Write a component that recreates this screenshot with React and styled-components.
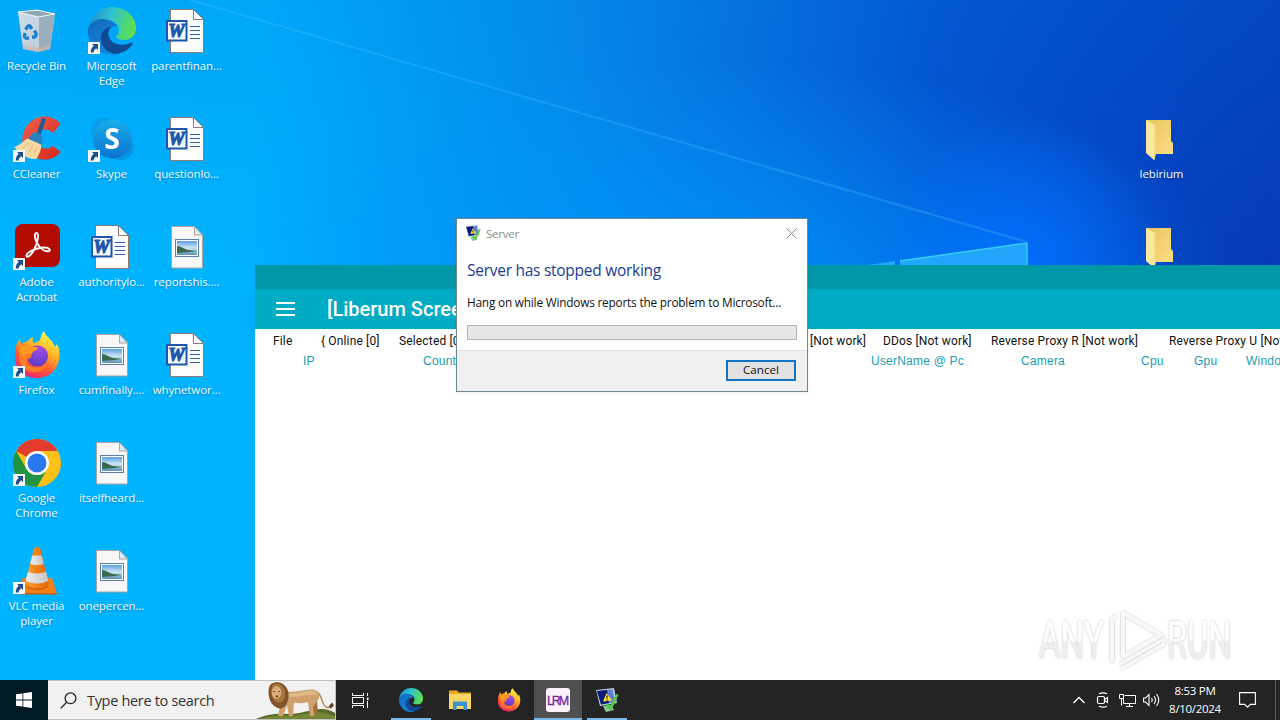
import React from "react";
import styled, { createGlobalStyle, css } from "styled-components";

const GlobalStyle = createGlobalStyle`
  * {
    box-sizing: border-box;
  }

  body {
    margin: 0;
    overflow: hidden;
    font-family: "Open Sans", "Noto Sans", sans-serif;
  }

  svg {
    display: block;
  }
`;

const Screen = styled.div`
  position: relative;
  display: flex;
  flex-direction: column;
  width: 1280px;
  height: 720px;
  overflow: hidden;
`;

const Desktop = styled.main`
  position: relative;
  flex: 1;
  overflow: hidden;
  background:
    radial-gradient(ellipse 150px 150px at 1020px 270px, rgba(0, 110, 255, 0.95), rgba(0, 110, 255, 0) 100%),
    radial-gradient(ellipse 520px 240px at 720px 300px, rgba(0, 150, 255, 0.8), rgba(0, 140, 255, 0) 100%),
    linear-gradient(to bottom, rgba(0, 120, 225, 0.2), rgba(0, 180, 255, 0) 260px),
    linear-gradient(93deg, #00b4ff 0, #00b3ff 260px, #00a2f8 390px, #058cec 570px, #056cdc 770px, #0350ce 940px, #0444c4 1100px, #053ab8 1290px);
`;

const Wallpaper = styled.svg`
  position: absolute;
  top: 0;
  left: 0;
`;

const IconGrid = styled.div`
  position: relative;
  display: grid;
  grid-template-columns: repeat(17, 75px);
  grid-auto-rows: 108px;
  margin-left: -1px;
`;

const Shortcut = styled.div`
  grid-column: ${(p) => p.$col};
  grid-row: ${(p) => p.$row};
  display: flex;
  flex-direction: column;
  align-items: center;
  padding-top: 7px;
`;

const ShortcutIcon = styled.div`
  position: relative;
  width: 48px;
  height: 48px;
`;

const ArrowBadge = styled.svg`
  position: absolute;
  left: 0;
  bottom: 1px;
`;

const Label = styled.span`
  margin-top: 3px;
  color: #f2faff;
  font-size: 11.5px;
  line-height: 15px;
  letter-spacing: -0.1px;
  text-align: center;
  white-space: pre;
  text-shadow: 0 1px 2px rgba(0, 40, 90, 0.35);
`;

const AppWindow = styled.section`
  position: absolute;
  top: 265px;
  left: 255px;
  width: 1100px;
  height: 415px;
  background: #fff;
`;

const AppStrip = styled.div`
  height: 24px;
  background: #0097a7;
`;

const AppHeader = styled.header`
  display: flex;
  align-items: center;
  gap: 32px;
  height: 40px;
  padding-left: 21px;
  color: #fff;
  background: #00acc4;
  font: 500 20px Roboto, sans-serif;
`;

const HeaderRow = styled.div`
  display: grid;
  grid-template-columns: ${(p) => p.$columns};
  padding-left: ${(p) => p.$start}px;
  height: ${(p) => p.$height}px;
  line-height: ${(p) => p.$height}px;
  font-size: 12px;
  white-space: pre;

  ${(p) =>
    p.$menu
      ? css`
          color: #111;
          font-family: Roboto, sans-serif;
          letter-spacing: 0.15px;
        `
      : css`
          color: #1a9db0;
          font-family: "Liberation Sans", sans-serif;
          letter-spacing: 0.22px;
        `}
`;

const Dialog = styled.section`
  position: absolute;
  top: 218px;
  left: 456px;
  display: flex;
  flex-direction: column;
  width: 352px;
  height: 174px;
  background: #fff;
  border: 1px solid #6f8791;
  box-shadow: 0 1px 4px rgba(0, 0, 0, 0.06);
`;

const DialogTitle = styled.div`
  display: flex;
  align-items: center;
  gap: 5px;
  height: 28px;
  padding: 0 10px 0 8px;
  color: #8c8c8c;
  font-size: 11.5px;
  letter-spacing: -0.25px;

  svg:last-child {
    margin-left: auto;
  }
`;

const DialogBody = styled.div`
  flex: 1;
  padding: 12px 10px 0;
`;

const Heading = styled.h1`
  margin: 0;
  color: #1a3c94;
  font-size: 15.5px;
  font-weight: 400;
  line-height: 22px;
  letter-spacing: -0.27px;
`;

const Message = styled.p`
  margin: 13px 0 0;
  color: #111;
  font-size: 11.8px;
  line-height: 16px;
  letter-spacing: -0.19px;
  white-space: nowrap;
`;

const ProgressBar = styled.div`
  height: 15px;
  margin-top: 15px;
  background: #e6e6e6;
  border: 1px solid #b4b4b4;
`;

const DialogFooter = styled.footer`
  display: flex;
  justify-content: flex-end;
  height: 41px;
  padding: 9px 11px 0 0;
  background: #f0f0f0;
  border-top: 1px solid #dfdfdf;
`;

const CancelButton = styled.button`
  width: 70px;
  height: 21px;
  padding: 0 0 1px;
  color: #111;
  background: #e1e1e1;
  border: 2px solid #0f75c4;
  font: 11.6px/16px "Open Sans", sans-serif;
`;

const Watermark = styled.svg`
  position: absolute;
  left: 1030px;
  top: 600px;
  overflow: visible;
`;

const Taskbar = styled.footer`
  position: relative;
  display: flex;
  height: 40px;
  background: #242424;
`;

const StartButton = styled.div`
  display: grid;
  place-items: center;
  width: 48px;
  background: #001b24;
`;

const SearchBox = styled.div`
  display: flex;
  align-items: center;
  width: 288px;
  padding-left: 12px;
  color: #333;
  background: #f1f1f1;
  border: solid #c3c3c3;
  border-width: 1px 1px 1px 0;
  font-size: 14.5px;
  letter-spacing: -0.32px;

  span {
    margin-left: 10px;
    white-space: nowrap;
  }

  svg:last-child {
    margin-left: auto;
  }
`;

const TaskButton = styled.div`
  display: grid;
  place-items: center;
  width: 48px;
  margin-right: ${(p) => p.$gap || 1}px;
  background: ${(p) => (p.$active ? "#505050" : "transparent")};
  box-shadow: ${(p) => (p.$active ? "inset 0 -2px #76b9ed" : "none")};

  ${(p) =>
    p.$running &&
    css`
      background: linear-gradient(#76b9ed, #76b9ed) center bottom / 40px 2px no-repeat;
    `}
`;

const Tray = styled.div`
  display: flex;
  align-items: center;
  margin-left: auto;
  padding-right: 4px;
  color: #fff;
`;

const TrayIcon = styled.div`
  display: grid;
  place-items: center;
  width: ${(p) => p.$width || 24}px;
`;

const Clock = styled.div`
  width: 64px;
  font-size: 11.5px;
  line-height: 18px;
  letter-spacing: -0.3px;
  text-align: center;
`;

const ShowDesktop = styled.div`
  width: 1px;
  height: 40px;
  margin-left: 8px;
  background: #5c5c5c;
`;

function RecycleBinIcon() {
  return (
    <svg width="48" height="48" viewBox="0 0 48 48">
      <defs>
        <linearGradient id="bin" x1="0" y1="0" x2="1" y2="1">
          <stop offset="0" stopColor="#cfdde8" />
          <stop offset="1" stopColor="#b9c8d3" />
        </linearGradient>
      </defs>
      <path d="M5 5 25 3 42 7 37 42 25 45 10 42Z" fill="url(#bin)" />
      <path d="M5 5 24 3 42 7 25 10Z" fill="#8fa6b6" stroke="#eef5fa" strokeWidth="1.200" />
      <path d="M26 10.500 41.500 7.500 37 42 26 45Z" fill="#9aadba" />
      <path d="M10 38 26 41 37.500 38 37 42 25 45 10.500 42Z" fill="#cdb8ac" opacity=".7" />
      <g fill="none" stroke="#1f7fd4" strokeWidth="3.400">
        <path d="M12.500 22.500 15 19.200q1-1 2.200.2L18.800 22" />
        <path d="M21.500 23.500 23 26.800q.4 2-1.500 3.200l-2.500.3" />
        <path d="M16 31.300l-2.800-.3q-2-.6-1.700-2.600l.8-2.400" />
      </g>
    </svg>
  );
}

function EdgeIcon({ size = 48 }) {
  return (
    <svg width={size} height={size} viewBox="0 0 48 48">
      <defs>
        <linearGradient id="edgeTop" x1="0" y1=".4" x2="1" y2=".6">
          <stop offset="0" stopColor="#1b92cf" />
          <stop offset=".45" stopColor="#2fc2d0" />
          <stop offset=".8" stopColor="#4bd873" />
          <stop offset="1" stopColor="#6be044" />
        </linearGradient>
        <linearGradient id="edgeMid" x1="0" y1="0" x2=".6" y2="1">
          <stop offset="0" stopColor="#1268bd" />
          <stop offset="1" stopColor="#128ade" />
        </linearGradient>
      </defs>
      <path d="M0 24C1 9 12 0 24 0c14 0 24 10 24 21 0 8-6 12-12 12-5 0-8-1.500-8-3 0-1 3-2.500 3-7 0-6-6-10.500-14-10.500C9 12.500 2 17 0 24Z" fill="url(#edgeTop)" />
      <path d="M0 24c0-7 7-12 14-12 8 0 14 4 15 8.500-6-2.500-11 2-11 9.500 0 8 6 14 14 16.500-3 1-5 1.500-8 1.500C11 48 0 37 0 24Z" fill="url(#edgeMid)" />
      <path d="M21 20c-6 2-10 9-7.500 16C16 43 23 47.500 30 46.500c6-1 11-4 14.500-9.500.6-1-.4-1.800-1.500-1.200C36 39.300 27 38 23 33c-4-5-3-10 1-13Z" fill="#114a94" />
      <path d="M24 20c2-1 4-1 5 .5.5 4-1 6-2 8-.8 1.500.5 3 2.500 4 4 2 8 1 10.500 0-3 5-10 6-14.500 3C20 32 19 24 24 20Z" fill={size > 30 ? "#02a5f8" : "#242424"} />
    </svg>
  );
}

function WordIcon() {
  return (
    <svg width="48" height="48" viewBox="0 0 48 48">
      <path d="M7.500 2.500h23l10 10v33h-33Z" fill="#fdfdfd" stroke="#8a7a73" />
      <path d="M30.500 2.500v10h10Z" fill="#fff" stroke="#8a7a73" />
      <path d="M27 19.500h10M27 23.500h10M27 27.500h10M27 31.500h10" stroke="#2b5fad" />
      <rect x="3" y="13" width="21.500" height="21.500" fill="#1d57ad" />
      <rect x="5" y="15" width="17.500" height="17.500" fill="#f5f8fc" />
      <text x="13.600" y="30" textAnchor="middle" fontFamily="Liberation Serif, serif" fontStyle="italic" fontWeight="700" fontSize="18.500" fill="#1d57ad" stroke="#1d57ad" strokeWidth="1.100">
        W
      </text>
    </svg>
  );
}

function PictureIcon() {
  return (
    <svg width="48" height="48" viewBox="0 0 48 48">
      <defs>
        <linearGradient id="photo" x1="0" y1="0" x2="0" y2="1">
          <stop offset="0" stopColor="#5b9ee0" />
          <stop offset=".5" stopColor="#cfe6f5" />
          <stop offset=".7" stopColor="#9cc4d8" />
          <stop offset="1" stopColor="#5b90b8" />
        </linearGradient>
      </defs>
      <path d="M8.500 3.500h23l8 8.500v33h-31Z" fill="#f7f7f7" stroke="#aaa39f" />
      <path d="M31.500 3.500V12h8Z" fill="#d9edf5" stroke="#aaa39f" />
      <rect x="12.500" y="16.500" width="23" height="17" fill="#fff" stroke="#5d7fa6" />
      <rect x="14" y="18" width="20" height="14" fill="url(#photo)" />
      <path d="M14 23c4 0 7 3 11 4l9 1-9 1.200L14 30Z" fill="#3c6b50" />
    </svg>
  );
}

function CCleanerIcon() {
  return (
    <svg width="48" height="48" viewBox="0 0 48 48">
      <defs>
        <linearGradient id="ccRed" x1="0" y1="0" x2="1" y2="1">
          <stop offset="0" stopColor="#f2604c" />
          <stop offset="1" stopColor="#d3281d" />
        </linearGradient>
      </defs>
      <path d="M47.500 9 40 18c-6-6-15-4-16 5s8 14 16 8l7.500 6C38 50 13 46 9.500 28 8 11 21 1 33 1.500c6 .5 11 3 14.500 7.500Z" fill="url(#ccRed)" />
      <path d="M30.500 5 25.500 20" stroke="#1c5c98" strokeWidth="4" strokeLinecap="round" />
      <path d="M20 17.500q8-1.500 10 6.500l-2 6-13-5.500Z" fill="#2a83c0" />
      <path d="M1 32c7-2 9-6 13.500-8.500L28 29.500c1 5-2 9-4 14-7 2-15-3-23-11.500Z" fill="#f5d9a4" />
      <path d="m10 33 5-5m1 9 4-7m1 9 3-7" stroke="#e3b878" fill="none" />
    </svg>
  );
}

function SkypeIcon() {
  return (
    <svg width="48" height="48" viewBox="0 0 48 48">
      <defs>
        <linearGradient id="skype" x1="0" y1="0" x2="0" y2="1">
          <stop offset="0" stopColor="#18aeea" />
          <stop offset="1" stopColor="#0a74d0" />
        </linearGradient>
      </defs>
      <circle cx="16" cy="16" r="13" fill="#0f92de" opacity=".6" />
      <circle cx="32.500" cy="32" r="13" fill="#0a84d4" opacity=".6" />
      <circle cx="24.500" cy="24" r="19.500" fill="url(#skype)" />
      <text x="24" y="33.500" textAnchor="middle" fontFamily="Open Sans, sans-serif" fontWeight="700" fontSize="28" fill="#fff">
        S
      </text>
    </svg>
  );
}

function AcrobatIcon() {
  return (
    <svg width="48" height="48" viewBox="0 0 48 48">
      <rect x="2" y="1" width="45" height="43" rx="8" fill="#b30b00" />
      <path
        d="M23.500 10c-2.500 0-2 6 .8 10.500 2.700 4.600 7.200 8 10.700 7.800 3.500-.5 2-4.300-5-3.800-7 .6-16.500 4.500-16.500 8 0 3 4.500.5 8-6.500 3-6 5-16 2-16Z"
        fill="none"
        stroke="#fff"
        strokeWidth="1.900"
      />
    </svg>
  );
}

function FirefoxIcon({ size = 48 }) {
  return (
    <svg width={size} height={size} viewBox="0 0 48 48">
      <defs>
        <linearGradient id="foxBody" x1=".8" y1="0" x2=".25" y2="1">
          <stop offset=".1" stopColor="#fff04a" />
          <stop offset=".4" stopColor="#ffae22" />
          <stop offset=".7" stopColor="#ff4f3b" />
          <stop offset="1" stopColor="#e8227b" />
        </linearGradient>
        <radialGradient id="foxGlobe" cx=".6" cy=".2" r=".9">
          <stop offset="0" stopColor="#a04bea" />
          <stop offset="1" stopColor="#5639bd" />
        </radialGradient>
      </defs>
      <path d="M7 8c0 2 .5 4 1.500 5 2-1.500 4-2.500 6.500-3 1.500-2 3-3.500 5-4-1 3 0 5 1 6 3-2 5-1 6-3 1-3 1-6 4-9 1 5 9 9 11 16l2-3c3 6 3 11 2 16-2 11-11 18-22 18C12 47 2 39 2 27 1.500 19 3 12 7 8Z" fill="url(#foxBody)" />
      <circle cx="24.500" cy="25" r="10.500" fill="url(#foxGlobe)" />
      <path d="M6 16c4-3 9-3 13-.5 2 1.300 4 .5 6 1-.5 3-5 3-6 6-1 2 0 3-1 4-2 2-4 0-4 3 0 4 4 7 9 7 7 0 12-3 12-9 0 8-5 14-13 14-9 0-16-7-16-15 0-4-2-7 0-10.500Z" fill="#ff7a24" />
      <path d="M6 16c4-3 9-3 13-.5 2 1.300 4 .5 6 1-.5 3-5 3-6 6-4 0-6 0-8 4-2-3-4-5-5-10.500Z" fill="#ff991f" />
    </svg>
  );
}

function ChromeIcon() {
  return (
    <svg width="48" height="48" viewBox="0 0 48 48">
      <circle cx="24" cy="24" r="24" fill="#fbc116" />
      <path d="M3.200 12A24 24 0 0 1 44.800 12H24A12 12 0 0 0 13.600 18Z" fill="#e33b2e" />
      <path d="M3.200 12 13.600 30A12 12 0 0 0 34.400 30L24 48A24 24 0 0 1 3.200 12Z" fill="#229342" />
      <circle cx="24" cy="24" r="12" fill="#fff" />
      <circle cx="24" cy="24" r="9.500" fill="#2878ee" />
    </svg>
  );
}

function VlcIcon() {
  return (
    <svg width="48" height="48" viewBox="0 0 48 48">
      <defs>
        <linearGradient id="cone" x1="0" y1="0" x2="1" y2="0">
          <stop offset="0" stopColor="#f9a02b" />
          <stop offset=".45" stopColor="#f58416" />
          <stop offset="1" stopColor="#e0640a" />
        </linearGradient>
        <linearGradient id="coneWhite" x1="0" y1="0" x2="1" y2="0">
          <stop offset="0" stopColor="#ededed" />
          <stop offset="1" stopColor="#c4c4c4" />
        </linearGradient>
      </defs>
      <path d="M10 31h29l5 16H4Z" fill="#f18213" />
      <path d="M4 46h40v1.500H4Z" fill="#cf5d07" />
      <path d="M12 36c0 7 24 7 24 0l-1 4c-3 4-19 4-22 0Z" fill="#d4620a" />
      <path d="M24 0c2 0 3 1 3.500 3L36 37c-3 5-21 5-24 0l8.500-34C21 1 22 0 24 0Z" fill="url(#cone)" />
      <path d="M19.300 8.500h9.400l2 8c-3 2-10.400 2-13.400 0Z" fill="url(#coneWhite)" />
      <path d="M15 24.500c4 2.500 14 2.500 18 0l2.300 9c-4 4-18.600 4-22.600 0Z" fill="url(#coneWhite)" />
    </svg>
  );
}

function FolderIcon() {
  return (
    <svg width="48" height="48" viewBox="0 0 48 48">
      <defs>
        <linearGradient id="folderBack" x1="0" y1="0" x2="1" y2="1">
          <stop offset="0" stopColor="#e9c55f" />
          <stop offset="1" stopColor="#fbdc83" />
        </linearGradient>
      </defs>
      <path d="M8 5h25v21l2 2v11H16Z" fill="url(#folderBack)" />
      <path d="M8 5 17.500 10v30L16 45 8 38Z" fill="#fce79e" />
      <path d="M17 10v30l-1 5" stroke="#f3d274" fill="none" />
    </svg>
  );
}

function ServerIcon({ size = 16 }) {
  return (
    <svg width={size} height={size} viewBox="0 0 24 24">
      <path d="m8 18 8-1 3 5-8 2Z" fill="#8fc49a" />
      <path d="M1 2 19 0l3 15-17 3Z" fill="#bccbd4" />
      <path d="m2 3 15.500-1.500L20 14 6 16.500Z" fill="#5f7fd6" />
      <path d="m2 3 10-1 2 13-8 1.500Z" fill="#0c1a78" />
      <path d="M11.500 5 17 12.500l-9 1Z" fill="#f9e22f" />
      <path d="M12 7.500v3m.2 1v1" stroke="#222" strokeWidth="1.200" />
      <path d="m12.500 16 2.500 3 6.500-12.500 1.500.5-7 15-5-4Z" fill="#53c94a" stroke="#53c94a" />
    </svg>
  );
}

function ExplorerIcon() {
  return (
    <svg width="24" height="24" viewBox="0 0 24 24">
      <path d="M1 2.500h8l2 2h12V20H1Z" fill="#e5a823" />
      <path d="M1 6h22v15H1Z" fill="#fbd566" />
      <path d="M5 22v-7.500q0-1 1-1h12q1 0 1 1V22h-3.500v-4h-7v4Z" fill="#3b93d0" />
    </svg>
  );
}

function LrmIcon() {
  return (
    <svg width="24" height="24" viewBox="0 0 24 24">
      <rect width="24" height="24" rx="3" fill="#fbf2fd" />
      <text x="12" y="17" textAnchor="middle" fontFamily="Liberation Sans, sans-serif" fontSize="12.500" letterSpacing="-2.200" fill="#7a2a9b" stroke="#7a2a9b" strokeWidth=".3" dx="-1">
        LRM
      </text>
    </svg>
  );
}

function LionIcon() {
  return (
    <svg width="79" height="38" viewBox="0 0 79 38">
      <path d="M0 38c10-5 22-6 33-5 12 0 22-5 32-5 6 0 11 2 14 4v6Z" fill="#5a6c2a" />
      <path d="M4 38c12-4 22-3 31-3l28-4 16 4v3Z" fill="#758636" />
      <path d="M61 11c6 3 4 14 10 15.500 2 .5 3 0 4-1" stroke="#b98a55" strokeWidth="1.500" fill="none" />
      <path d="m72.500 25.500 3.500-4 2 3-3 3Z" fill="#6b4120" />
      <path d="M52 20h9l1 13h-4l-1.500-8Z" fill="#a06f3e" />
      <path d="M28 10c8 2 17-1 28-1.500 6 .5 8 4 7 9L60 22l-3 4 1.500 9H54l-2-14c-5 1.500-9 1.500-14 .5L37 35h-4l-2-11-4 11h-5l3-14Z" fill="#cda06c" />
      <path d="M30 12c10 2 18-3 27-2 3 1 4 2 4 4-9-1-20 3-31 2Z" fill="#dfb98a" />
      <path d="M15 3c5-3 12-2 15 3 4 5 3 13 0 18-4 5-8 4-13 0-5-5-6-17-2-21Z" fill="#80532c" />
      <path d="M16.500 4.500c4-3 9-2 11.500 3 2 6 1 11-3 14-4 1-7-1-9-6-1-5-1-8 .5-11Z" fill="#a8753f" />
      <ellipse cx="20.500" cy="11.500" rx="4.800" ry="6.500" fill="#d9ad78" />
      <path d="M17.500 10.500h1.500m3.500 0H24M20 15h2l-1 1.200Z" stroke="#4a2e18" strokeWidth=".9" fill="#4a2e18" />
    </svg>
  );
}

const shortcuts = [
  { col: 1, row: 1, icon: <RecycleBinIcon />, label: "Recycle Bin" },
  { col: 2, row: 1, icon: <EdgeIcon />, label: "Microsoft\nEdge", link: true },
  { col: 3, row: 1, icon: <WordIcon />, label: "parentfinan..." },
  { col: 1, row: 2, icon: <CCleanerIcon />, label: "CCleaner", link: true },
  { col: 2, row: 2, icon: <SkypeIcon />, label: "Skype", link: true },
  { col: 3, row: 2, icon: <WordIcon />, label: "questionlo..." },
  { col: 1, row: 3, icon: <AcrobatIcon />, label: "Adobe\nAcrobat", link: true },
  { col: 2, row: 3, icon: <WordIcon />, label: "authoritylo..." },
  { col: 3, row: 3, icon: <PictureIcon />, label: "reportshis...." },
  { col: 1, row: 4, icon: <FirefoxIcon />, label: "Firefox", link: true },
  { col: 2, row: 4, icon: <PictureIcon />, label: "cumfinally...." },
  { col: 3, row: 4, icon: <WordIcon />, label: "whynetwor..." },
  { col: 1, row: 5, icon: <ChromeIcon />, label: "Google\nChrome", link: true },
  { col: 2, row: 5, icon: <PictureIcon />, label: "itselfheard..." },
  { col: 1, row: 6, icon: <VlcIcon />, label: "VLC media\nplayer", link: true },
  { col: 2, row: 6, icon: <PictureIcon />, label: "onepercen..." },
  { col: 16, row: 2, icon: <FolderIcon />, label: "lebirium" },
  { col: 16, row: 3, icon: <FolderIcon />, label: "" },
];

function LiberumWindow() {
  return (
    <AppWindow>
      <AppStrip />
      <AppHeader>
        <svg width="19" height="16" viewBox="0 0 19 16" stroke="#fff" strokeWidth="2">
          <path d="M0 2h19M0 8h19M0 14h19" />
        </svg>
        <span>[Liberum Screen</span>
      </AppHeader>
      <HeaderRow $menu $start={18} $height={24} $columns="48px 78px 411px 73px 108px 178px 200px">
        <span>File</span>
        <span>{"{ Online [0]"}</span>
        <span>Selected [0]</span>
        <span>[Not work]</span>
        <span>DDos [Not work]</span>
        <span>Reverse Proxy R [Not work]</span>
        <span>Reverse Proxy U [Not work]</span>
      </HeaderRow>
      <HeaderRow $start={48} $height={16} $columns="120px 448px 150px 120px 53px 52px 80px">
        <span>IP</span>
        <span>Country</span>
        <span>UserName @ Pc</span>
        <span>Camera</span>
        <span>Cpu</span>
        <span>Gpu</span>
        <span>Windows</span>
      </HeaderRow>
    </AppWindow>
  );
}

function ServerDialog() {
  return (
    <Dialog>
      <DialogTitle>
        <ServerIcon size={16} />
        <span>Server</span>
        <svg width="11" height="11" viewBox="0 0 11 11" stroke="#8c8c8c">
          <path d="m.5.5 10 10m0-10-10 10" />
        </svg>
      </DialogTitle>
      <DialogBody>
        <Heading>Server has stopped working</Heading>
        <Message>Hang on while Windows reports the problem to Microsoft...</Message>
        <ProgressBar />
      </DialogBody>
      <DialogFooter>
        <CancelButton>Cancel</CancelButton>
      </DialogFooter>
    </Dialog>
  );
}

function AnyRunMark() {
  return (
    <Watermark width="215" height="80" viewBox="0 0 215 80">
      <defs>
        <linearGradient id="mark" x1="0" y1="0" x2="0" y2="1">
          <stop offset=".5" stopColor="#fff" />
          <stop offset=".52" stopColor="#eee" />
        </linearGradient>
        <filter id="markShadow" x="-10%" y="-10%" width="120%" height="120%">
          <feDropShadow dx="0" dy="0" stdDeviation="1.300" floodColor="#000" floodOpacity=".3" />
        </filter>
      </defs>
      <g filter="url(#markShadow)" fill="url(#mark)" fontFamily="Roboto, sans-serif" fontWeight="400" fontSize="51">
        <text transform="translate(9 58) scale(.65 1)">ANY</text>
        <text transform="translate(137 58) scale(.64 1)">RUN</text>
        <g fill="none" stroke="#f8f8f8" strokeWidth="4" strokeLinejoin="round">
          <path d="M93 57V13l38 22-38 22" />
          <path d="M86 16l-4 3v43" />
          <path d="M91 69 134 44v-5L90 64" strokeWidth="3" />
        </g>
      </g>
    </Watermark>
  );
}

export default function App() {
  return (
    <Screen>
      <GlobalStyle />
      <Desktop>
        <Wallpaper width="1280" height="265" viewBox="0 0 1280 265">
          <path d="M190 0 1027 242 880 265H0V0Z" fill="#00aaff" opacity=".07" />
          <path d="M190 0 1027 242" stroke="#4bc0ff" strokeOpacity=".3" strokeWidth="2" />
          <path d="M868 265 895 261v4ZM900 261 1027 243v22H900Z" fill="#22a6fb" />
          <path d="m900 261 127-18v22" fill="none" stroke="#35d0fa" strokeWidth="1.500" />
        </Wallpaper>
        <IconGrid>
          {shortcuts.map(({ col, row, icon, label, link }) => (
            <Shortcut key={`${col}-${row}`} $col={col} $row={row}>
              <ShortcutIcon>
                {icon}
                {link && (
                  <ArrowBadge width="12" height="12" viewBox="0 0 12 12">
                    <rect width="12" height="12" fill="#f4f6f8" />
                    <path d="M4 2h6v6L8.200 6.200Q5.500 8 5.500 10.500H2.800Q2.500 6.500 5.800 3.800Z" fill="#1f4e8c" />
                  </ArrowBadge>
                )}
              </ShortcutIcon>
              <Label>{label}</Label>
            </Shortcut>
          ))}
        </IconGrid>
        <LiberumWindow />
        <ServerDialog />
        <AnyRunMark />
      </Desktop>
      <Taskbar>
        <StartButton>
          <svg width="16" height="16" viewBox="0 0 16 16" fill="#fff">
            <path d="M0 2.300 6.500 1.400v6.200H0ZM7.300 1.300 16 0v7.600H7.300ZM0 8.400h6.500v6.200L0 13.700ZM7.300 8.400H16V16l-8.700-1.300Z" />
          </svg>
        </StartButton>
        <SearchBox>
          <svg width="17" height="17" viewBox="0 0 17 17" fill="none" stroke="#222" strokeWidth="1.300">
            <circle cx="10.500" cy="6.300" r="5.400" />
            <path d="M6.700 10.300.6 16.400" />
          </svg>
          <span>Type here to search</span>
          <LionIcon />
        </SearchBox>
        <TaskButton $gap={3}>
          <svg width="17" height="16" viewBox="0 0 17 16" fill="none" stroke="#fff">
            <path d="M.5 1v2.500h11V1M.5 16v-2.500h11V16M.5 5.500h11v6H.5ZM15.500 1v3M15.500 9v7" />
            <rect x="15" y="5.500" width="1.500" height="2.500" fill="#fff" stroke="none" />
          </svg>
        </TaskButton>
        <TaskButton $running>
          <EdgeIcon size={24} />
        </TaskButton>
        <TaskButton>
          <ExplorerIcon />
        </TaskButton>
        <TaskButton>
          <FirefoxIcon size={24} />
        </TaskButton>
        <TaskButton $active>
          <LrmIcon />
        </TaskButton>
        <TaskButton $running>
          <ServerIcon size={24} />
        </TaskButton>
        <Tray>
          <TrayIcon>
            <svg width="12" height="8" viewBox="0 0 12 8" fill="none" stroke="#fff" strokeWidth="1.300">
              <path d="m.5 7 5.500-5.500L11.500 7" />
            </svg>
          </TrayIcon>
          <TrayIcon>
            <svg width="14" height="16" viewBox="0 0 14 16" fill="none" stroke="#fff" strokeWidth="1.200">
              <rect x="1.500" y="4.500" width="7" height="7" rx="1.500" />
              <path d="m8.500 7.500 3-2v5l-3-2M3 1.800q4-2 8 0M3 14.200q4 2 8 0" />
            </svg>
          </TrayIcon>
          <TrayIcon>
            <svg width="17" height="14" viewBox="0 0 17 14" fill="none" stroke="#fff">
              <path d="M5.500 2.500h11v8h-12V6M.5 1.500h4v4h-4ZM2.500 5.500v7M10.500 10.500v3M7 13.500h7" />
            </svg>
          </TrayIcon>
          <TrayIcon>
            <svg width="17" height="14" viewBox="0 0 17 14" fill="none" stroke="#fff" strokeWidth="1.100">
              <path d="M.6 5v4h2l3.400 3.500v-11L2.600 5ZM8.500 5q1.500 2 0 4M11 3q3 4 0 8M13.500 1q4.500 6 0 12" />
            </svg>
          </TrayIcon>
          <Clock>
            8:53 PM
            <br />
            8/10/2024
          </Clock>
          <TrayIcon $width={40}>
            <svg width="17" height="16" viewBox="0 0 17 16" fill="none" stroke="#fff" strokeWidth="1.100">
              <path d="M.6.6h15.800v11.800h-5L8.500 15.200l-2.900-2.800h-5Z" />
            </svg>
          </TrayIcon>
          <ShowDesktop />
        </Tray>
      </Taskbar>
    </Screen>
  );
}
